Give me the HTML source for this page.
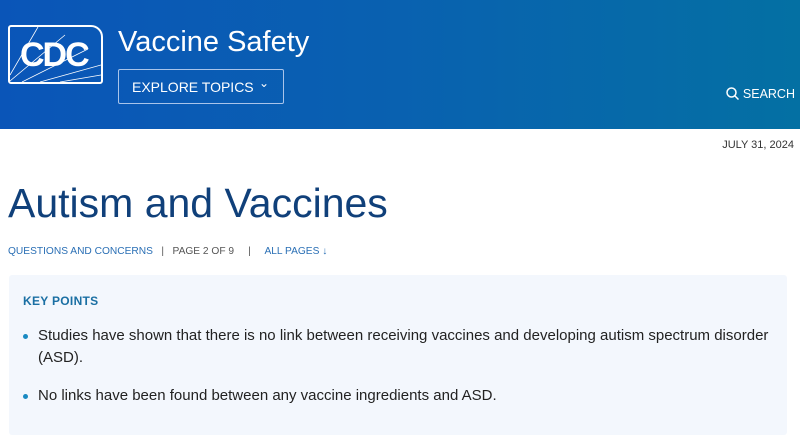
<!DOCTYPE html>
<html><head><style>
*{margin:0;padding:0;box-sizing:border-box}
body{width:800px;height:431px;overflow:hidden;background:#fff;font-family:"Liberation Sans",sans-serif;position:relative}
.hdr{position:absolute;left:0;top:0;width:800px;height:129px;background:linear-gradient(90deg,#0a55b8 0%,#0961b0 50%,#0470a3 100%)}
.logo{position:absolute;left:8px;top:25px;width:95px;height:59px;border:2px solid #fff;border-radius:3px 12px 3px 3px;overflow:hidden}
.logo span{position:absolute;left:10px;top:9px;color:#fff;font-weight:bold;font-size:34px;letter-spacing:-2px}
.title{position:absolute;left:118px;top:26px;color:#fff;font-size:29px}
.btn{position:absolute;left:118px;top:69px;width:166px;height:35px;border:1px solid #a9c4ea;border-radius:2px;color:#fff;font-size:14px;padding:9px 0 0 13px}
.search{position:absolute;right:5px;top:87px;color:#fff;font-size:12.5px;white-space:nowrap}
.date{position:absolute;right:6px;top:139px;font-size:11px;color:#333}
h1{position:absolute;left:8px;top:180px;font-weight:normal;font-size:41px;color:#10407a}
.crumb{position:absolute;left:8px;top:246px;font-size:10.2px;color:#2a6fb5;white-space:nowrap}
.crumb .g{color:#555}
.box{position:absolute;left:9px;top:275px;width:778px;height:160px;background:#f3f7fd;border-radius:3px}
.kp{position:absolute;left:14px;top:19px;font-size:12px;font-weight:bold;color:#1a6fa3;letter-spacing:.3px}
ul{position:absolute;left:29px;top:50px;width:745px;font-size:15px;line-height:22px;color:#222;list-style:none}
li{position:relative;margin-bottom:16px}
li:before{content:"";position:absolute;left:-15px;top:9px;width:5px;height:5px;border-radius:50%;background:#1a8ac2}
</style></head><body>
<div class="hdr">
<div class="logo"><svg width="91" height="55" style="position:absolute;left:0;top:0" stroke="#fff" stroke-width="0.8" fill="none"><path d="M0 48L28 0M0 54L55 8M12 55L78 22M30 55L91 38M50 55L91 48"/></svg><span>CDC</span></div>
<div class="title">Vaccine Safety</div>
<div class="btn">EXPLORE TOPICS <span style="position:absolute;left:140px;top:6px;font-size:12px">&#8964;</span></div>
<div class="search"><svg width="13" height="13" style="vertical-align:-2px" stroke="#fff" stroke-width="1.5" fill="none"><circle cx="5.5" cy="5.5" r="4.5"/><path d="M9 9l3.5 3.5"/></svg> SEARCH</div>
</div>
<div class="date">JULY 31, 2024</div>
<h1>Autism and Vaccines</h1>
<div class="crumb">QUESTIONS AND CONCERNS &nbsp;&nbsp;<span class="g">|&nbsp;&nbsp; PAGE 2 OF 9 &nbsp;&nbsp;&nbsp;&nbsp;|</span>&nbsp;&nbsp;&nbsp;&nbsp; ALL PAGES &#8595;</div>
<div class="box"><div class="kp">KEY POINTS</div>
<ul><li>Studies have shown that there is no link between receiving vaccines and developing autism spectrum disorder (ASD).</li><li>No links have been found between any vaccine ingredients and ASD.</li></ul></div>
</body></html>
